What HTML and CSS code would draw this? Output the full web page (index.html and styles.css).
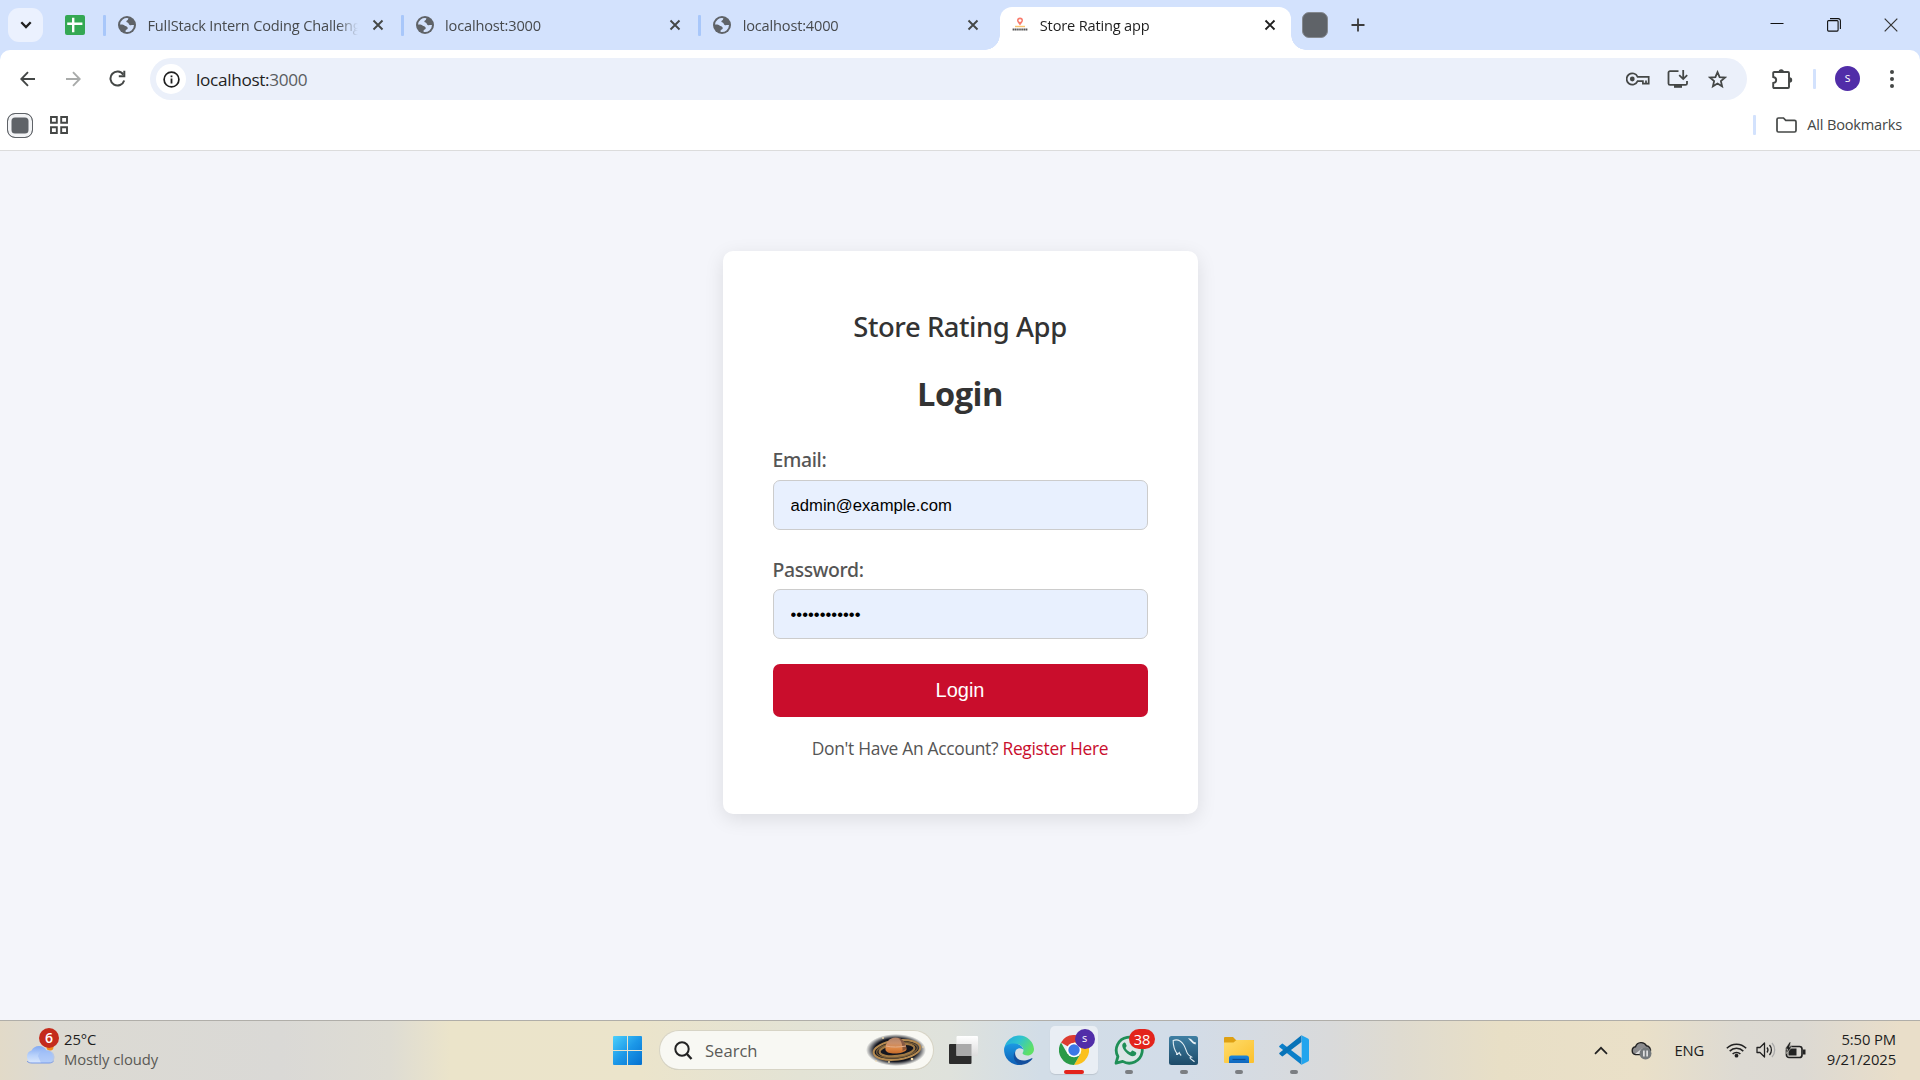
FILE: index.html
```html
<!DOCTYPE html>
<html lang="en">
<head>
<meta charset="utf-8">
<title>Store Rating app</title>
<link rel="stylesheet" href="styles.css">
</head>
<body>
<svg class="defs" aria-hidden="true">
  <defs>
    <symbol id="globe" viewBox="0 0 18 18"><circle cx="9" cy="9" r="9" fill="#5f6368"/><path fill="#d3e2fd" d="M2 8.6A7 7 0 0 1 10.4 2.2L10 3.6C9.8 4.3 9 4.5 8.500 5.100 8 5.900 8.700 6.400 9.600 6.600 10.800 6.900 10.500 8.300 11.600 8.900 12.800 9.500 14.400 8.700 16 9A7 7 0 0 1 7.600 15.900L7.700 13.900C8.600 13.500 9.700 13.300 9.700 12.200 9.700 10.800 8.500 10.400 7.400 10 6 9.500 5.700 8.700 4.200 8.600Z"/></symbol>
    <symbol id="cross" viewBox="0 0 12 12"><path d="M1.500 1.500l9 9M10.500 1.500l-9 9" fill="none" stroke="currentColor" stroke-width="1.900"/></symbol>
  </defs>
</svg>

<header class="tabstrip">
  <button class="tab-search" aria-label="Search tabs"><svg width="12" height="8" viewBox="0 0 12 8"><path d="M1.300 1.300L6 6l4.700-4.700" fill="none" stroke="#1f1f1f" stroke-width="2.300"/></svg></button>
  <svg class="sheets" width="20" height="20" viewBox="0 0 20 20"><rect width="20" height="20" rx="2" fill="#34a853"/><path d="M2.200 8.700h15.200M8.200 2.800v14.500" stroke="#fff" stroke-width="2.400"/></svg>
  <div class="tab"><svg class="fav"><use href="#globe"/></svg><span class="tab-title">FullStack Intern Coding Challenge</span><svg class="tab-close"><use href="#cross"/></svg></div>
  <div class="tab"><svg class="fav"><use href="#globe"/></svg><span class="tab-title">localhost:3000</span><svg class="tab-close"><use href="#cross"/></svg></div>
  <div class="tab"><svg class="fav"><use href="#globe"/></svg><span class="tab-title">localhost:4000</span><svg class="tab-close"><use href="#cross"/></svg></div>
  <div class="tab active"><svg class="store-icon" viewBox="0 0 16 16"><path fill="#f97b6d" d="M8 .6a3 3 0 0 0-3 3c0 2 2.100 3 3 5 .9-2 3-3 3-5a3 3 0 0 0-3-3z"/><circle cx="8" cy="3.600" r="1.400" fill="#fff"/><path d="M3 9.500h10" stroke="#f8c471" stroke-width="1.400"/><path d="M.6 12.500h15" stroke="#555" stroke-width="2" stroke-dasharray="1.500 .4"/></svg><span class="tab-title">Store Rating app</span><svg class="tab-close"><use href="#cross"/></svg></div>
  <span class="mini-tab"></span>
  <svg class="plus" width="14" height="14" viewBox="0 0 14 14"><path d="M7 .5v13M.5 7h13" stroke="#3c3c3c" stroke-width="1.800"/></svg>
  <div class="window-buttons">
    <svg width="14" height="14" viewBox="0 0 14 14"><path d="M.5 5.500h13" stroke="#111"/></svg>
    <svg width="14" height="14" viewBox="0 0 14 14"><rect x=".6" y="2.600" width="10.500" height="10.500" rx="1" fill="none" stroke="#111" stroke-width="1.100"/><path d="M3 .6h8.200a2.200 2.200 0 0 1 2.200 2.200V11" fill="none" stroke="#111" stroke-width="1.100"/></svg>
    <svg width="14" height="14" viewBox="0 0 14 14"><path d="M.7.7l12.600 12.600M13.300.7L.7 13.300" stroke="#333" stroke-width="1.200"/></svg>
  </div>
</header>

<div class="chrome-panel">
  <nav class="toolbar">
    <svg class="back" width="16" height="16" viewBox="0 0 16 16"><path d="M15 8H1.800M8 1.200L1.300 8 8 14.800" fill="none" stroke="#444746" stroke-width="1.900"/></svg>
    <svg class="forward" width="16" height="16" viewBox="0 0 16 16"><path d="M1 8h13.200M8 1.200L14.700 8 8 14.800" fill="none" stroke="#a9abaa" stroke-width="1.900"/></svg>
    <svg class="reload" width="17" height="17" viewBox="0 0 17 17"><path d="M14.300 4.600A7 7 0 1 0 15.200 10.500" fill="none" stroke="#444746" stroke-width="2"/><path d="M15.300 .8v5.400H9.800" fill="none" stroke="#444746" stroke-width="2"/></svg>
    <div class="omnibox">
      <span class="site-info"><svg width="17" height="17" viewBox="0 0 17 17"><circle cx="8.500" cy="8.500" r="7.400" fill="none" stroke="#1f1f1f" stroke-width="1.700"/><path d="M8.500 7.500v5M8.500 4.500v1.800" stroke="#1f1f1f" stroke-width="1.800"/></svg></span>
      <span class="url">localhost:<span class="port">3000</span></span>
      <svg class="key" width="24" height="14" viewBox="0 0 24 14"><path d="M11.600 4.800H22.700V11.700H16.900V9.200H11.600A5.700 5.700 0 1 1 11.600 4.800ZM20 11.500V8.500" fill="none" stroke="#444746" stroke-width="1.700"/><circle cx="6.300" cy="7" r="2.400" fill="#444746"/></svg>
      <svg class="install" width="22" height="18" viewBox="0 0 22 18"><path d="M11.500 1.100H3a1.500 1.500 0 0 0-1.500 1.500v10.800a1.500 1.500 0 0 0 1.500 1.500h15.500a1.500 1.500 0 0 0 1.500-1.500V11" fill="none" stroke="#444746" stroke-width="1.800"/><path d="M7 14.500h8v3.300H7z" fill="#444746"/><path d="M16.200 0v8.500M12.200 5.200l4 3.900 4-3.900" fill="none" stroke="#444746" stroke-width="1.800"/></svg>
      <svg class="star" width="19" height="19" viewBox="0 0 19 19"><path d="M9.500 2.200l2.100 5 5.300.4-4 3.500 1.200 5.200-4.600-2.800-4.600 2.800 1.200-5.200-4-3.500 5.300-.4z" fill="none" stroke="#444746" stroke-width="1.800"/></svg>
    </div>
    <svg class="puzzle" width="21" height="20" viewBox="0 0 21 20"><path d="M2.500 3H16a1 1 0 0 1 1 1v14a1 1 0 0 1-1 1H2.200a1 1 0 0 1-1-1v-4c4-.6 4-5.400 0-6V4a1 1 0 0 1 1-1z" fill="none" stroke="#444746" stroke-width="1.900"/><path d="M6.500 3a2.700 2.700 0 0 1 5.400 0zM17.500 8.300a2.700 2.700 0 0 1 0 5.400z" fill="#444746"/></svg>
    <span class="divider"></span>
    <span class="avatar">s</span>
    <svg class="menu" width="4" height="18" viewBox="0 0 4 18" fill="#444746"><circle cx="2" cy="2" r="2"/><circle cx="2" cy="9" r="2"/><circle cx="2" cy="16" r="2"/></svg>
  </nav>
  <div class="bookmarks">
    <span class="group-chip"></span>
    <svg width="18" height="18" viewBox="0 0 18 18"><path d="M1 1h5.800v5.800H1zM11.200 1H17v5.800h-5.800zM1 11.200h5.800V17H1zM11.200 11.200H17V17h-5.800z" fill="none" stroke="#444746" stroke-width="1.900"/></svg>
    <span class="divider wide"></span>
    <svg class="folder" width="21" height="16" viewBox="0 0 21 16"><path d="M1 2.500A1.500 1.500 0 0 1 2.500 1h5l2.200 2.300h8.800A1.500 1.500 0 0 1 20 4.800v8.700a1.500 1.500 0 0 1-1.500 1.500h-16A1.500 1.500 0 0 1 1 13.500z" fill="none" stroke="#444746" stroke-width="1.700"/></svg>
    <span class="all-bookmarks">All Bookmarks</span>
  </div>
</div>

<main class="page">
  <form class="card">
    <h2 class="app-name">Store Rating App</h2>
    <h1 class="heading">Login</h1>
    <label class="label" for="email">Email:</label>
    <input class="input" id="email" type="text" value="admin@example.com">
    <label class="label second" for="password">Password:</label>
    <input class="input password" id="password" type="password" value="admin@123456">
    <button class="submit" type="button">Login</button>
    <p class="register">Don't Have An Account? <a class="register-link">Register Here</a></p>
  </form>
</main>

<footer class="taskbar">
  <div class="weather">
    <div class="weather-icon">
      <svg width="30" height="20" viewBox="0 0 30 20"><defs><linearGradient id="cl" x2="0" y2="1"><stop stop-color="#82a9f2"/><stop offset=".55" stop-color="#b9d2fb"/><stop offset="1" stop-color="#d9e7fd"/></linearGradient></defs><circle cx="25" cy="3" r="3.500" fill="#f28a1d"/><path d="M7 19a6.500 6.500 0 0 1-.5-12.500A8.500 8.500 0 0 1 21.500 6.500 6.500 6.500 0 0 1 24 19z" fill="url(#cl)"/><path d="M13 12a7 7 0 0 1 9-5.500 6.500 6.500 0 0 1 7.500 7A6 6 0 0 1 24 19h-8z" fill="#9dbdf6" opacity=".6"/><path d="M2 17.200c1.500 1.500 3 1.800 5 1.800h17c2 0 3.500-.6 4.700-2" fill="none" stroke="#7799e8" stroke-width="1"/></svg>
      <span class="badge six">6</span>
    </div>
    <div class="weather-text"><span>25°C</span><span class="muted">Mostly cloudy</span></div>
  </div>

  <div class="apps">
    <svg class="start" width="29" height="29" viewBox="0 0 29 29"><defs><linearGradient id="win" x2="1" y2="1"><stop stop-color="#4cd0fb"/><stop offset=".5" stop-color="#1c98e8"/><stop offset="1" stop-color="#0470cf"/></linearGradient></defs><path fill="url(#win)" d="M1 0h13v14H0V1a1 1 0 0 1 1-1zM15 0h13a1 1 0 0 1 1 1v13H15zM0 15h14v14H1a1 1 0 0 1-1-1zM15 15h14v13a1 1 0 0 1-1 1H15z"/></svg>
    <div class="search">
      <svg width="19" height="19" viewBox="0 0 19 19"><circle cx="8" cy="8" r="6.700" fill="none" stroke="#222" stroke-width="2"/><path d="M12.500 12.500l5 5.500" stroke="#222" stroke-width="2.400"/></svg>
      <span class="search-text">Search</span>
      <svg class="saturn" width="60" height="32" viewBox="0 0 60 32"><defs><radialGradient id="sp"><stop offset=".72" stop-color="#14161f"/><stop offset="1" stop-color="#14161f" stop-opacity="0"/></radialGradient><linearGradient id="pl" x2="0" y2="1"><stop stop-color="#b18268"/><stop offset=".35" stop-color="#c9906c"/><stop offset=".7" stop-color="#dd8643"/><stop offset="1" stop-color="#c46a29"/></linearGradient></defs><ellipse cx="30" cy="16" rx="30" ry="16" fill="url(#sp)"/><g fill="none" transform="rotate(-7 31 16)"><ellipse cx="31" cy="16" rx="23.500" ry="9.500" stroke="#b58a50" stroke-width="2"/><ellipse cx="31" cy="16" rx="20.500" ry="7.500" stroke="#6f5635" stroke-width="1.500"/><ellipse cx="31" cy="16" rx="17.500" ry="6" stroke="#a17a45" stroke-width="2.200"/></g><path d="M19.500 16c-1-7 4-12.500 10-12.500S40 8 40.500 15.500C39 20 21 21.500 19.500 16z" fill="url(#pl)"/><path d="M32 3.800c5 1 8 5.500 8.500 11.200l-4 2C37 11 35 6 32 3.800z" fill="#6c4434" opacity=".7"/><path d="M20 12c6 1.500 13 1.300 20 0" fill="none" stroke="#e5b08b" stroke-width="1"/><g fill="#f7dfae"><circle cx="46" cy="25" r="1.300"/><circle cx="23" cy="28" r=".9"/><circle cx="10" cy="27" r=".8"/><circle cx="17" cy="4" r=".9"/><circle cx="57" cy="13" r=".8"/></g></svg>
    </div>
    <div class="app"><svg width="29" height="28" viewBox="0 0 29 28"><defs><linearGradient id="tv" x2="0" y2="1"><stop stop-color="#fff"/><stop offset="1" stop-color="#dcdcdc"/></linearGradient></defs><rect y="8" width="22.500" height="20" rx="1" fill="#2c2c2c"/><rect x="7.500" width="21.500" height="20" rx="1" fill="url(#tv)"/><path d="M7.500 8h15v12h-15z" fill="#aaa"/></svg></div>
    <div class="app"><svg width="30" height="30" viewBox="0 0 30 30"><defs><linearGradient id="e1" x2="1" y2=".5"><stop stop-color="#1fa5e0"/><stop offset=".5" stop-color="#2fc3d0"/><stop offset="1" stop-color="#5fe066"/></linearGradient><linearGradient id="e2" x2="0" y2="1"><stop stop-color="#1b9ae3"/><stop offset="1" stop-color="#0f5eb5"/></linearGradient></defs><path fill="url(#e1)" d="M.3 13A15 15 0 0 1 30 14c0 4-3 6.500-6.500 6.500-2.500 0-5-1-5-2.200 0-.6 1-1.200 1-3.300 0-3-3-6-8-6C5 9 .8 11 .3 13z"/><path fill="url(#e2)" d="M.2 13C1 10 5 8.500 10 8.500c5.500 0 9 3 9.500 6.500-1-2-6-3-8 1-2.500 5.500 1 11.500 6 13.800A15 15 0 0 1 .2 13z"/><path fill="#134f9e" d="M11.200 16.500c-1.200 7 5.500 10 11 8.800 2.500-.5 4.300-1.500 5.300-2 .8-.3 1.200.2.800.8A15 15 0 0 1 17 29.900c-7-1.500-9-9-5.800-13.400z"/></svg></div>
    <div class="app"><div class="tile"><svg width="30" height="30" viewBox="0 0 30 30"><path d="M15 15L2 7.500A15 15 0 0 1 28 7.500H15z" fill="#dd3c30"/><path d="M28 7.500A15 15 0 0 1 15 30l6.500-11.200L15 7.500z" fill="#fbc11d"/><path d="M2 7.500A15 15 0 0 0 15 30l6.500-11.200L8.500 18.800z" fill="#2a9a48"/><circle cx="15" cy="15" r="7.300" fill="#fff"/><circle cx="15" cy="15" r="5.700" fill="#3b78e7"/></svg><span class="badge profile">s</span><i class="running current"></i></div></div>
    <div class="app"><svg width="30" height="30" viewBox="0 0 30 30"><path d="M2 28.200l1.900-6.700A13 13 0 1 1 8.700 26.400z" fill="#dbe6e6" stroke="#1f8f57" stroke-width="2.800" stroke-linejoin="round"/><path d="M10.200 7.500c-3 1.500-2.500 5 1.200 9.300 4.300 4.700 8.800 6 10.600 2.500.6-1.200.3-1.900-.5-2.400l-2.400-1.200c-.9-.4-1.300.2-2 1.100-.5.6-1.100.5-2.200-.2-1.500-1-2.500-2-3.200-3.300-.4-.8 1.200-1.500.9-2.700l-1.100-2.600c-.3-.6-.7-.7-1.300-.5z" fill="#1f8f57"/></svg><span class="badge count">38</span><i class="running"></i></div>
    <div class="app"><svg width="29" height="29" viewBox="0 0 29 29"><defs><linearGradient id="my" x2="0" y2="1"><stop stop-color="#3f7fa3"/><stop offset="1" stop-color="#1e4b69"/></linearGradient></defs><rect width="29" height="29" rx="2.500" fill="url(#my)"/><path d="M8.500 18.500C6 15 4 10 4.200 4.500 8 3 12 5 14.500 8.500c2 2.800 2.300 6 4 9 1 1.800 2.500 2.500 4 3.500-1.500.2-2 .5-1 1.700l4 3M8.500 18.500l1.700-2c.5 1.200 1 2 2 3" fill="none" stroke="#e4eef3" stroke-width="1.100"/><path d="M19 2l3 1 3 3 2 .5-.5 2-2.500-1-3.500-3.500z" fill="#e9f1f5"/><path d="M7 19l1-3 1 3z" fill="#e9f1f5"/></svg><i class="running"></i></div>
    <div class="app"><svg width="30" height="26" viewBox="0 0 30 26"><defs><linearGradient id="fo" x2="1" y2="1"><stop stop-color="#ffdc6b"/><stop offset="1" stop-color="#fcc02c"/></linearGradient><linearGradient id="fb" x2="0" y2="1"><stop stop-color="#1a86dd"/><stop offset="1" stop-color="#1067bd"/></linearGradient></defs><path d="M0 1a1 1 0 0 1 1-1h8l3 3h17a1 1 0 0 1 1 1v5H0z" fill="#dea013"/><path d="M0 5.500h9.500L12.500 3H29a1 1 0 0 1 1 1v21a1 1 0 0 1-1 1H1a1 1 0 0 1-1-1z" fill="url(#fo)"/><path d="M5 26v-5a2.500 2.500 0 0 1 2.500-2.500h15A2.500 2.500 0 0 1 25 21v5z" fill="url(#fb)"/><path d="M8.500 22.500h13" stroke="#0b4c93" stroke-width="1.200"/></svg><i class="running"></i></div>
    <div class="app"><svg width="30" height="30" viewBox="0 0 30 30"><path d="M.6 10.800l2-1.900q.7-.6 1.500 0L22.500 23v6.800L.6 12.300q-.9-.8 0-1.500z" fill="#0c7fc9"/><path d="M.6 19.200l2 1.900q.7.600 1.500 0L22.500 7V.2L.6 17.700q-.9.800 0 1.500z" fill="#0873b8"/><path d="M22 .1l7 3.400q1 .5 1 1.600v19.800q0 1.100-1 1.600l-7 3.400q.7-.6.700-1.500V1.500q0-.9-.7-1.400z" fill="#23a5ee"/></svg><i class="running"></i></div>
  </div>

  <div class="tray">
    <svg class="caret" width="14" height="9" viewBox="0 0 14 9"><path d="M1 7.800l6-6 6 6" fill="none" stroke="#222" stroke-width="1.700"/></svg>
    <svg class="onedrive" width="21" height="20" viewBox="0 0 21 20"><path d="M4.500 14.500a3.900 3.900 0 0 1 0-7.700 6 6 0 0 1 11-1 4.500 4.500 0 0 1 3.700 6l-4 2.700z" fill="#8b8b8d" stroke="#222" stroke-width="1.400"/><path d="M4 14l7-5.500 5 2-3 3.500z" fill="#dedede"/><circle cx="14.500" cy="13.500" r="6" fill="#74797b"/><path d="M12.900 10.500v6M16.100 10.500v6" stroke="#fff" stroke-width="1.300"/></svg>
    <span class="lang">ENG</span>
    <svg class="wifi" width="21" height="16" viewBox="0 0 21 16"><g fill="none" stroke="#222" stroke-width="1.500"><path d="M.8 6.200a13.700 13.700 0 0 1 19.400 0M3.700 9.100a9.600 9.600 0 0 1 13.600 0M6.600 12a5.500 5.500 0 0 1 7.800 0"/></g><circle cx="10.500" cy="13.700" r="1.900" fill="#222"/></svg>
    <svg class="volume" width="20" height="16" viewBox="0 0 20 16"><g fill="none" stroke="#222" stroke-width="1.300"><path d="M1 5.500h3L8.500 1v14L4 10.500H1z" stroke-linejoin="round"/><path d="M11 5.500a4 4 0 0 1 0 5M13.500 3a7.500 7.500 0 0 1 0 10"/><path d="M16 1a10.500 10.500 0 0 1 0 14" stroke="#aaa"/></g></svg>
    <svg class="battery" width="21" height="17" viewBox="0 0 21 17"><rect x="1.500" y="4.500" width="15.500" height="11" rx="2.500" fill="none" stroke="#222" stroke-width="1.700"/><path d="M3.500 6.500h8v7h-8z" fill="#222"/><path d="M18 7.500h2.500v5H18z" fill="#222"/><path d="M4.500 0L0 7h2.500l-1 4.500L7 5H4.500L6 0z" fill="#222" stroke="#dedcd4" stroke-width=".6"/></svg>
    <div class="clock"><span>5:50 PM</span><span>9/21/2025</span></div>
  </div>
</footer>
</body>
</html>
```
FILE: styles.css
```css
* { box-sizing: border-box; }
body {
  margin: 0;
  width: 1920px;
  height: 1080px;
  overflow: hidden;
  display: flex;
  flex-direction: column;
  font-family: "Open Sans", "Noto Sans", sans-serif;
  background: #d3e2fd;
}
svg { display: block; flex: none; }
button { border: 0; padding: 0; }
.defs { position: absolute; width: 0; height: 0; }

/* Tab strip */
.tabstrip { display: flex; align-items: center; height: 50px; flex: none; padding-left: 8px; }
.tab-search {
  width: 35px; height: 34px; border-radius: 11px; background: #ebf1fe;
  display: flex; align-items: center; justify-content: center;
}
.sheets { margin: 0 18px 0 22px; }
.tab {
  display: flex; align-items: center; width: 297.6px; flex: none;
  padding-left: 15px; color: #474a4d;
}
.tab::before {
  content: ""; width: 3px; height: 21px; margin-left: -15px; margin-right: 12px;
  border-radius: 1px; background: #a8c7fa; flex: none;
}
.fav { width: 18px; height: 18px; }
.tab-title {
  width: 212px; margin-left: 11.5px; overflow: hidden; white-space: nowrap;
  font-size: 14.6px; letter-spacing: -0.18px; line-height: 24px;
  -webkit-mask-image: linear-gradient(90deg, #000 190px, transparent 210px);
  mask-image: linear-gradient(90deg, #000 190px, transparent 210px);
}
.tab-close { width: 12px; height: 12px; margin-left: 12px; color: #444746; }
.tab.active {
  position: relative; width: 291px; height: 43px; margin: 7px 0 0 4px;
  padding: 0 0 7px 12px; border-radius: 12px 12px 0 0; background: #fff; color: #1f1f1f;
}
.tab.active::before, .tab.active::after {
  content: ""; position: absolute; bottom: 0; width: 15px; height: 15px;
  margin: 0; border-radius: 0; background: radial-gradient(circle at 0 0, transparent 14.5px, #fff 15px);
}
.tab.active::before { left: -15px; }
.tab.active::after { right: -15px; background: radial-gradient(circle at 100% 0, transparent 14.5px, #fff 15px); }
.tab.active .tab-title { width: 212px; margin-left: 12px; }
.tab.active .tab-close { margin-left: 12px; color: #1f1f1f; }
.store-icon { width: 16px; height: 16px; }
.mini-tab { width: 26px; height: 26px; margin-left: 11px; border-radius: 7px; background: #5f6368; border: 1px solid #85898f; }
.plus { margin-left: 23px; }
.window-buttons { display: flex; gap: 43px; margin: 0 22px 0 auto; }

/* Toolbar and bookmarks bar */
.chrome-panel { height: 101px; flex: none; background: #fff; border-radius: 10px 10px 0 0; border-bottom: 1px solid #dcdcdc; }
.toolbar { display: flex; align-items: center; height: 57px; padding-left: 20px; }
.forward { margin-left: 29px; }
.reload { margin-left: 28px; }
.omnibox {
  display: flex; align-items: center; width: 1597px; height: 42px;
  margin: 1px 0 0 24px; padding-left: 6px; border-radius: 21px; background: #ebf0fa;
}
.site-info { display: flex; align-items: center; justify-content: center; width: 30px; height: 30px; border-radius: 50%; background: #fff; }
.url { margin-left: 10px; font-size: 17.2px; letter-spacing: -0.32px; color: #1f1f1f; }
.port { color: #5a5d61; }
.key { margin-left: auto; }
.install { margin-left: 17px; }
.star { margin: 0 20px 0 19px; }
.puzzle { margin-left: 24.5px; }
.divider { width: 3px; height: 20px; margin-left: 20px; border-radius: 1px; background: #d3e2fd; }
.avatar {
  width: 25px; height: 25px; margin-left: 19.500px; border-radius: 50%; background: #512da8;
  color: #fff; font-size: 12px; line-height: 24px; text-align: center;
}
.menu { margin-left: 30px; }
.bookmarks { display: flex; align-items: center; height: 36px; padding: 0 18px 0 7px; }
.group-chip { width: 26px; height: 25px; margin-right: 17px; border: 1.5px solid #5f6368; border-radius: 8px; background: #5f6368; box-shadow: inset 0 0 0 3.5px #f3f4f6; }
.divider.wide { margin: 0 20px 0 auto; }
.all-bookmarks { margin: -2px 0 0 10px; font-size: 14.6px; letter-spacing: -0.2px; color: #444746; }

/* Login page */
.page { height: 869px; flex: none; background: #f4f5fa; padding-top: 100px; }
.card {
  display: flex; flex-direction: column; width: 475px; height: 563px; margin: 0 auto;
  padding: 51px 50px 50px; border-radius: 10px; background: #fff; box-shadow: 0 5px 19px rgba(0, 0, 0, 0.1);
}
.app-name { margin: 0; font-family: "Noto Sans", sans-serif; font-size: 27.4px; font-weight: 500; letter-spacing: -0.42px; line-height: 50px; text-align: center; color: #333; }
.heading { margin: 0 0 4px; font-size: 32.6px; letter-spacing: -0.5px; line-height: 84px; text-align: center; color: #333; }
.label { font-family: "Noto Sans", sans-serif; font-size: 19.4px; font-weight: 500; letter-spacing: -0.36px; line-height: 40px; color: #555; }
.label.second { padding-top: 1px; line-height: 39px; margin-top: 19px; }
.input {
  height: 50px; padding: 1px 17px 0; border: 1px solid #ccc; border-radius: 7px; background: #e8f0fe;
  font: 16.67px "Liberation Sans", Arial, sans-serif; color: #000; outline: 0;
}
.submit {
  height: 53px; margin-top: 25px; border-radius: 7px; background: #c90d2c; color: #fff;
  font: 20px "Liberation Sans", Arial, sans-serif; flex: none;
}
.register { margin: 16px 0 0; font-size: 17.4px; letter-spacing: -0.3px; line-height: 30px; text-align: center; color: #555; }
.register-link { color: #c90d2c; }

/* Taskbar */
.taskbar {
  display: flex; align-items: center; height: 60px; flex: none; border-top: 1px solid #b0aea9;
  padding-bottom: 1px; font-size: 14.8px; color: #1d1d1d;
  background: linear-gradient(90deg, #e2dac8 0, #dcdad3 50px, #dad9d6 280px, #dedcd3 390px, #ebe4ca 450px, #ebe4cb 640px, #e3e3d5 800px, #dfe2dc 950px, #d2dde7 1040px, #d2dce8 1180px, #d9dadb 1330px, #dfdbd0 1400px, #e8dfc6 1500px, #eae0c8 1640px, #dddad3 1740px, #dcd9d3 1800px, #e9dec9 1900px, #e9dec9 100%);
}
.weather { display: flex; align-items: center; width: 600px; padding-left: 25px; }
.weather-icon { position: relative; margin-top: 7px; }
.weather-text { display: flex; flex-direction: column; margin: -2px 0 0 9px; line-height: 20px; letter-spacing: -0.05px; }
.muted { color: #5a5955; }
.badge { position: absolute; border-radius: 10px; color: #fff; text-align: center; }
.six { left: 14px; top: -16px; width: 20px; height: 20px; background: #c42b1c; font-size: 14px; font-weight: 600; line-height: 20px; }
.apps { display: flex; align-items: center; height: 58px; }
.start { margin: 0 18px 0 13px; }
.search {
  display: flex; align-items: center; width: 273px; height: 38px; margin-right: 3px; padding-left: 14px;
  border-radius: 19px; background: #f8f8f3; box-shadow: 0 0 0 1px #d7d4c5, 0 1px 0 #b9b7ad;
}
.search-text { margin-left: 12px; font-size: 16.6px; color: #5b5b58; }
.saturn { margin: 0 7px 0 auto; }
.app { position: relative; display: flex; align-items: center; justify-content: center; width: 55px; height: 58px; }
.tile { position: relative; display: flex; align-items: center; justify-content: center; width: 48px; height: 48px; border-radius: 5px; background: #e9eef4; box-shadow: 0 1px 1px #bcc5cf; }
.running { position: absolute; bottom: 5px; left: 24px; width: 8px; height: 4px; border-radius: 2px; background: #7b7e82; }
.running.current { left: 14px; bottom: 0; width: 20px; background: #e3231b; }
.profile { left: 25px; top: 3px; width: 20px; height: 20px; background: #512da8; font-size: 11px; line-height: 18px; }
.count { left: 28px; top: 8px; width: 26px; height: 20px; background: #e3231b; font-size: 14.6px; line-height: 20px; }
.tray { display: flex; align-items: center; margin: 0 24px 0 auto; }
.onedrive { margin-left: 23px; }
.lang { margin: -1px 0 0 22px; letter-spacing: -0.2px; }
.wifi { margin-left: 22px; }
.volume { margin-left: 9px; }
.battery { margin-left: 9px; }
.clock { display: flex; flex-direction: column; width: 90px; margin-top: -2px; line-height: 20px; text-align: right; letter-spacing: -0.1px; }
```
